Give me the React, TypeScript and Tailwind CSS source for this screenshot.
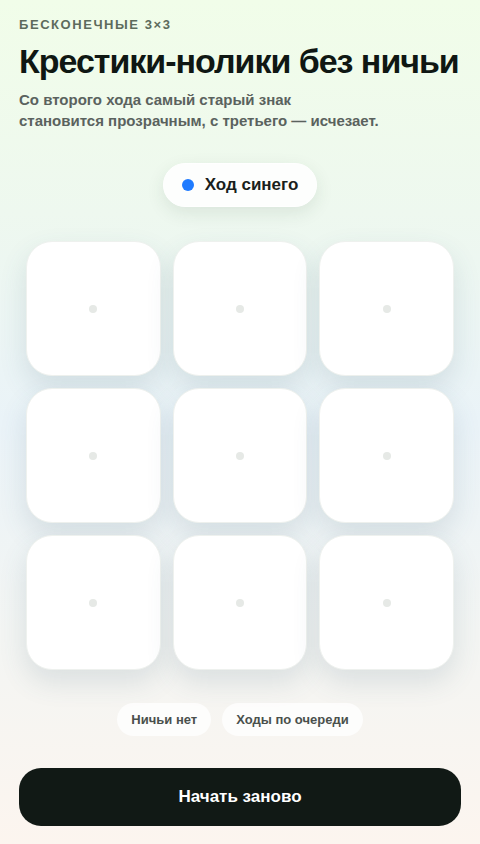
export default function App() {
  const cells = Array.from({ length: 9 }, (_, i) => i)

  return (
    <main
      className="min-h-[844px] w-full flex flex-col bg-[linear-gradient(180deg,#f1fde9_0%,#eef8ef_25%,#eaf3f8_50%,#f3f5f3_75%,#fcf5ef_100%)] text-[#111a15]"
      style={{ fontFamily: '"Liberation Sans", Arial, sans-serif' }}
    >
      {/* HEADER */}
      <div className="px-[19px] pt-[17px]">
        <div className="text-[13px] font-bold tracking-[0.12em] text-[#5d6b5c] leading-4">
          БЕСКОНЕЧНЫЕ 3×3
        </div>
        <h1 className="mt-[9px] text-[34px] font-bold leading-[38px] tracking-[-0.03em] text-[#0f1713]">
          Крестики-нолики без ничьи
        </h1>
        <p className="mt-[9px] text-[15px] font-bold leading-[21px] text-[#5a625e]">
          Со второго хода самый старый знак
          <br />
          становится прозрачным, с третьего — исчезает.
        </p>
      </div>

      {/* TURN */}
      <div className="flex justify-center mt-[32px]">
        <div className="flex items-center gap-[11px] h-[44px] px-[18px] rounded-full bg-white/90 shadow-[0_6px_18px_rgba(40,70,50,0.10)] border border-white">
          <span className="w-[12px] h-[12px] rounded-full bg-[#1f7bff]" />
          <span className="text-[17px] font-bold text-[#1a1f1c]">Ход синего</span>
        </div>
      </div>

      {/* BOARD */}
      <div className="mt-[34px] px-[26px] grid grid-cols-3 gap-x-[12px] gap-y-[12px]">
        {cells.map(i => (
          <button
            key={i}
            className="h-[135px] rounded-[26px] bg-white border border-[#eef1ee] shadow-[0_12px_28px_rgba(60,90,110,0.14)] flex items-center justify-center"
          >
            <span className="w-[8px] h-[8px] rounded-full bg-[#e6e9e6]" />
          </button>
        ))}
      </div>

      {/* CHIPS */}
      <div className="mt-[33px] flex justify-center gap-[11px]">
        <div className="h-[33px] px-[14px] rounded-full bg-white/75 flex items-center text-[13px] font-bold text-[#4a504c]">
          Ничьи нет
        </div>
        <div className="h-[33px] px-[14px] rounded-full bg-white/75 flex items-center text-[13px] font-bold text-[#4a504c]">
          Ходы по очереди
        </div>
      </div>

      {/* RESTART */}
      <div className="px-[19px] mt-[32px] pb-[18px]">
        <button className="w-full h-[58px] rounded-[22px] bg-[#111915] text-white text-[17px] font-bold">
          Начать заново
        </button>
      </div>
    </main>
  )
}
